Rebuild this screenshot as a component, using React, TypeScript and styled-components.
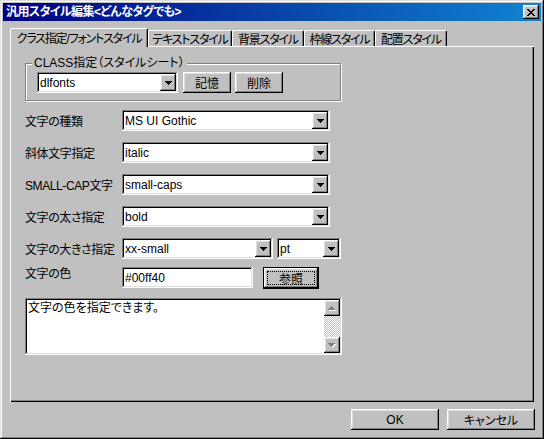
import styled, { createGlobalStyle } from 'styled-components';

const GlobalStyle = createGlobalStyle`
  html, body {
    margin: 0;
    padding: 0;
    background: #c0c0c0;
  }
  body {
    font-family: "Liberation Sans", "Noto Sans CJK JP", sans-serif;
    font-size: 12px;
    font-feature-settings: "palt" 1;
    color: #000;
  }
`;

const raised = `
  box-shadow: inset -1px -1px #000, inset 1px 1px #fff,
    inset -2px -2px #808080, inset 2px 2px #dfdfdf;
`;

const sunken = `
  box-shadow: inset -1px -1px #fff, inset 1px 1px #808080,
    inset -2px -2px #dfdfdf, inset 2px 2px #000;
`;

const tabs = [
  { label: 'クラス指定/フォントスタイル', w: 138, active: true },
  { label: 'テキストスタイル', w: 84 },
  { label: '背景スタイル', w: 72 },
  { label: '枠線スタイル', w: 71 },
  { label: '配置スタイル', w: 72 },
];

function ArrowDown({ color = '#000' }: { color?: string }) {
  return (
    <svg width="7" height="4" viewBox="0 0 7 4" shapeRendering="crispEdges">
      <path d="M0 0h7v1h-1v1h-1v1h-1v1h-1v-1h-1v-1h-1v-1h-1z" fill={color} />
    </svg>
  );
}

function DisabledArrow({ up }: { up?: boolean }) {
  const d = up
    ? 'M3 0h1v1h1v1h1v1h1v1h-7v-1h1v-1h1v-1h1z'
    : 'M0 0h7v1h-1v1h-1v1h-1v1h-1v-1h-1v-1h-1v-1h-1z';
  return (
    <svg width="8" height="5" viewBox="0 0 8 5" shapeRendering="crispEdges">
      <path d={d} fill="#fff" transform="translate(1 1)" />
      <path d={d} fill="#808080" />
    </svg>
  );
}

function CloseGlyph() {
  return (
    <svg width="8" height="7" viewBox="0 0 8 7" shapeRendering="crispEdges">
      <path
        d="M0 0h2v1h1v1h2v-1h1v-1h2v1h-1v1h-1v1h-1v1h1v1h1v1h1v1h-2v-1h-1v-1h-2v1h-1v1h-2v-1h1v-1h1v-1h1v-1h-1v-1h-1v-1h-1z"
        fill="#000"
      />
    </svg>
  );
}

function Combo({ value, width }: { value: string; width: number }) {
  return (
    <Field $w={width}>
      <FieldText>{value}</FieldText>
      <DropButton>
        <ArrowDown />
      </DropButton>
    </Field>
  );
}

export default function App() {
  return (
    <>
      <GlobalStyle />
      <Window>
        <TitleBar>
          <TitleText>{'汎用スタイル編集<どんなタグでも>'}</TitleText>
          <CloseButton>
            <CloseGlyph />
          </CloseButton>
        </TitleBar>

        <Body>
          <TabStrip>
            {tabs.map((t) => (
              <Tab key={t.label} $w={t.w} $active={t.active}>
                {t.label}
              </Tab>
            ))}
          </TabStrip>

          <Panel>
            <GroupBox>
              <GroupLabel>CLASS指定（スタイルシート）</GroupLabel>
              <Combo value="dlfonts" width={141} />
              <Button $w={48} $ml={5}>記憶</Button>
              <Button $w={48} $ml={4}>削除</Button>
            </GroupBox>

            <Row $mt={9}>
              <Label>文字の種類</Label>
              <Combo value="MS UI Gothic" width={208} />
            </Row>
            <Row $mt={11}>
              <Label>斜体文字指定</Label>
              <Combo value="italic" width={208} />
            </Row>
            <Row $mt={11}>
              <Label>SMALL-CAP文字</Label>
              <Combo value="small-caps" width={208} />
            </Row>
            <Row $mt={11}>
              <Label>文字の太さ指定</Label>
              <Combo value="bold" width={208} />
            </Row>
            <Row $mt={11}>
              <Label>文字の大きさ指定</Label>
              <Combo value="xx-small" width={151} />
              <Spacer $w={4} />
              <Combo value="pt" width={64} />
            </Row>
            <Row $mt={8} $top>
              <Label $pt={1} $lh={12}>文字の色</Label>
              <Field $w={131}>
                <FieldText>#00ff40</FieldText>
              </Field>
              <Spacer $w={10} />
              <DefaultButton>参照</DefaultButton>
            </Row>

            <Memo>
              <MemoText>文字の色を指定できます。</MemoText>
              <ScrollBar>
                <ScrollButton>
                  <DisabledArrow up />
                </ScrollButton>
                <ScrollTrack />
                <ScrollButton>
                  <DisabledArrow />
                </ScrollButton>
              </ScrollBar>
            </Memo>
          </Panel>

          <ButtonRow>
            <Button $w={88} $h={21}>OK</Button>
            <Button $w={88} $h={21}>キャンセル</Button>
          </ButtonRow>
        </Body>
      </Window>
    </>
  );
}

const Window = styled.div`
  width: 544px;
  height: 439px;
  box-sizing: border-box;
  padding: 3px;
  display: flex;
  flex-direction: column;
  background: #c0c0c0;
  box-shadow: inset -1px -1px #000, inset 1px 1px #dfdfdf,
    inset -2px -2px #808080, inset 2px 2px #fff;
`;

const TitleBar = styled.div`
  height: 18px;
  display: flex;
  align-items: center;
  justify-content: space-between;
  padding: 0 2px;
  background: linear-gradient(to right, #000080, #1084d0);
`;

const TitleText = styled.div`
  color: #fff;
  font-weight: bold;
  font-size: 12px;
  line-height: 18px;
  letter-spacing: -0.6px;
  padding-left: 1px;
  white-space: nowrap;
`;

const CloseButton = styled.div`
  width: 16px;
  height: 14px;
  box-sizing: border-box;
  display: flex;
  align-items: center;
  justify-content: center;
  background: #c0c0c0;
  ${raised}
`;

const Body = styled.div`
  flex: 1;
  display: flex;
  flex-direction: column;
  padding: 7px 7px 0 7px;
`;

const TabStrip = styled.div`
  height: 18px;
  display: flex;
  align-items: flex-end;
`;

const Tab = styled.div<{ $w: number; $active?: boolean }>`
  width: ${(p) => p.$w}px;
  height: ${(p) => (p.$active ? 19 : 16)}px;
  box-sizing: border-box;
  display: flex;
  align-items: center;
  justify-content: center;
  white-space: nowrap;
  letter-spacing: -1.2px;
  background: #c0c0c0;
  border-top: 1px solid #fff;
  border-left: 1px solid #fff;
  border-right: 1px solid #000;
  border-radius: 2px 2px 0 0;
  box-shadow: inset -1px 0 #808080;
  ${(p) =>
    p.$active &&
    `
    position: relative;
    z-index: 1;
    margin-bottom: -1px;
    padding-bottom: 2px;
  `}
`;

const Panel = styled.div`
  height: 356px;
  box-sizing: border-box;
  display: flex;
  flex-direction: column;
  padding: 17px 0 0 15px;
  box-shadow: inset 1px 1px #fff, inset -1px -1px #000, inset -2px -2px #808080;
`;

const GroupBox = styled.div`
  position: relative;
  width: 316px;
  height: 38px;
  box-sizing: border-box;
  display: flex;
  align-items: center;
  padding: 1px 0 0 11px;
  border: 1px solid #808080;
  box-shadow: inset 1px 1px #fff, 1px 1px #fff;
`;

const GroupLabel = styled.div`
  position: absolute;
  top: -9px;
  left: 6px;
  padding: 0 2px;
  background: #c0c0c0;
  line-height: 16px;
  white-space: nowrap;
`;

const Row = styled.div<{ $mt: number; $top?: boolean }>`
  display: flex;
  align-items: ${(p) => (p.$top ? 'flex-start' : 'center')};
  margin-top: ${(p) => p.$mt}px;
  height: ${(p) => (p.$top ? 22 : 21)}px;
`;

const Label = styled.div<{ $pt?: number; $lh?: number }>`
  width: 97px;
  flex-shrink: 0;
  white-space: nowrap;
  letter-spacing: -0.4px;
  padding-top: ${(p) => p.$pt ?? 0}px;
  ${(p) => (p.$lh ? `line-height: ${p.$lh}px;` : '')}
`;

const Spacer = styled.div<{ $w: number }>`
  width: ${(p) => p.$w}px;
  flex-shrink: 0;
`;

const Field = styled.div<{ $w: number }>`
  width: ${(p) => p.$w}px;
  height: 21px;
  box-sizing: border-box;
  flex-shrink: 0;
  display: flex;
  align-items: center;
  padding: 2px;
  background: #fff;
  ${sunken}
`;

const FieldText = styled.div`
  flex: 1;
  padding-left: 1px;
  white-space: nowrap;
  overflow: hidden;
`;

const DropButton = styled.div`
  width: 16px;
  height: 17px;
  box-sizing: border-box;
  display: flex;
  align-items: center;
  justify-content: center;
  background: #c0c0c0;
  ${raised}
`;

const Button = styled.div<{ $w: number; $h?: number; $ml?: number }>`
  width: ${(p) => p.$w}px;
  height: ${(p) => p.$h ?? 21}px;
  margin-left: ${(p) => p.$ml ?? 0}px;
  box-sizing: border-box;
  flex-shrink: 0;
  display: flex;
  align-items: center;
  justify-content: center;
  background: #c0c0c0;
  ${raised}
`;

const DefaultButton = styled.div`
  position: relative;
  width: 56px;
  height: 22px;
  box-sizing: border-box;
  display: flex;
  align-items: center;
  justify-content: center;
  border: 1px solid #000;
  background: #c0c0c0;
  ${raised}

  &::after {
    content: '';
    position: absolute;
    inset: 3px;
    border: 1px dotted #000;
  }
`;

const Memo = styled.div`
  margin-top: 9px;
  width: 317px;
  height: 57px;
  box-sizing: border-box;
  display: flex;
  padding: 2px;
  background: #fff;
  ${sunken}
`;

const MemoText = styled.div`
  flex: 1;
  padding: 1px 0 0 1px;
  line-height: 14px;
`;

const ScrollBar = styled.div`
  width: 16px;
  display: flex;
  flex-direction: column;
`;

const ScrollButton = styled.div`
  height: 16px;
  box-sizing: border-box;
  display: flex;
  align-items: center;
  justify-content: center;
  background: #c0c0c0;
  ${raised}
`;

const ScrollTrack = styled.div`
  flex: 1;
  background: repeating-conic-gradient(#c0c0c0 0 25%, #fff 0 50%) 0 0 / 2px 2px;
`;

const ButtonRow = styled.div`
  display: flex;
  justify-content: flex-end;
  gap: 8px;
  margin-top: 7px;
  margin-right: -1px;
`;
